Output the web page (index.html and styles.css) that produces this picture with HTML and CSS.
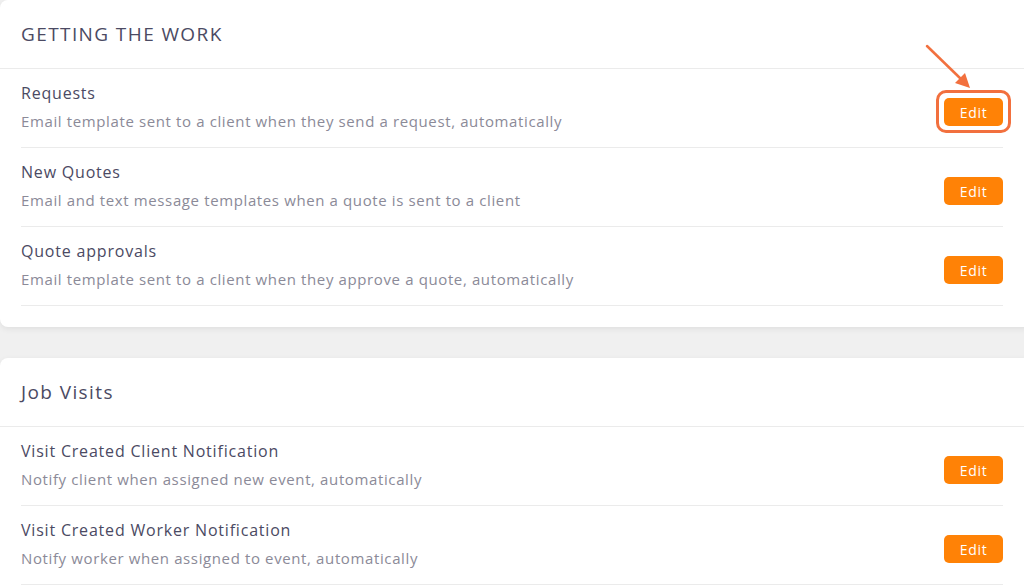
FILE: index.html
```html
<!DOCTYPE html>
<html lang="en">
<head>
<meta charset="utf-8">
<title>Email templates</title>
<link rel="stylesheet" href="styles.css">
</head>
<body>
<div class="page">
  <section class="card">
    <header class="card-header"><h2 class="card-title upper">GETTING THE WORK</h2></header>
    <div class="row">
      <div class="row-text">
        <div class="row-title">Requests</div>
        <div class="row-desc">Email template sent to a client when they send a request, automatically</div>
      </div>
      <div class="btn-wrap">
        <button class="btn">Edit</button>
        <span class="ring"></span>
        <svg class="arrow" width="60" height="60" viewBox="0 0 60 60">
          <line x1="3" y1="3" x2="38" y2="37" stroke="#f2703e" stroke-width="2.5" stroke-linecap="round"/>
          <polygon points="46,45 31,40 41,30" fill="#f2703e"/>
        </svg>
      </div>
    </div>
    <div class="row">
      <div class="row-text">
        <div class="row-title">New Quotes</div>
        <div class="row-desc">Email and text message templates when a quote is sent to a client</div>
      </div>
      <div class="btn-wrap"><button class="btn">Edit</button></div>
    </div>
    <div class="row">
      <div class="row-text">
        <div class="row-title">Quote approvals</div>
        <div class="row-desc">Email template sent to a client when they approve a quote, automatically</div>
      </div>
      <div class="btn-wrap"><button class="btn">Edit</button></div>
    </div>
  </section>

  <section class="card">
    <header class="card-header"><h2 class="card-title">Job Visits</h2></header>
    <div class="row">
      <div class="row-text">
        <div class="row-title">Visit Created Client Notification</div>
        <div class="row-desc">Notify client when assigned new event, automatically</div>
      </div>
      <div class="btn-wrap"><button class="btn">Edit</button></div>
    </div>
    <div class="row">
      <div class="row-text">
        <div class="row-title">Visit Created Worker Notification</div>
        <div class="row-desc">Notify worker when assigned to event, automatically</div>
      </div>
      <div class="btn-wrap"><button class="btn">Edit</button></div>
    </div>
  </section>
</div>
</body>
</html>
```

FILE: styles.css
```css
html, body {
  margin: 0;
  padding: 0;
  background: #f0f0f0;
  overflow: hidden;
}
body {
  font-family: "Open Sans", "Liberation Sans", sans-serif;
  color: #4b4a63;
}
.page {
  display: flex;
  flex-direction: column;
  gap: 31px;
  width: 1034px;
}
.card {
  background: #ffffff;
  border-radius: 8px;
  box-shadow: 0 2px 6px rgba(0, 0, 0, 0.07);
  padding-bottom: 21px;
}
.card-header {
  height: 68px;
  display: flex;
  align-items: center;
  padding: 0 21px;
  border-bottom: 1px solid #ebebeb;
}
.card-title {
  margin: 0;
  font-size: 19px;
  font-weight: 400;
  letter-spacing: 1.4px;
  color: #4b4a63;
}
.row {
  display: flex;
  justify-content: space-between;
  margin: 0 31px 0 21px;
  padding: 12px 0 14px;
  border-bottom: 1px solid #ebebeb;
  height: 52px;
}
.row-title {
  font-size: 16px;
  line-height: 24px;
  letter-spacing: 0.8px;
  color: #4b4a63;
}
.row-desc {
  margin-top: 4px;
  font-size: 15px;
  line-height: 24px;
  letter-spacing: 0.62px;
  color: #8b8a98;
}
.btn-wrap {
  position: relative;
  align-self: flex-start;
  margin-top: 17px;
}
.btn {
  display: block;
  width: 59px;
  height: 28px;
  border: none;
  border-radius: 5px;
  background: #ff8206;
  color: #ffffff;
  font-family: inherit;
  font-size: 14px;
  font-weight: 500;
  letter-spacing: 0.7px;
  padding: 0;
}
.ring {
  position: absolute;
  left: -8px;
  top: -8px;
  right: -8px;
  bottom: -7px;
  border: 3px solid #f2703e;
  border-radius: 10px;
}
.arrow {
  position: absolute;
  left: -20px;
  top: -55px;
}
```
